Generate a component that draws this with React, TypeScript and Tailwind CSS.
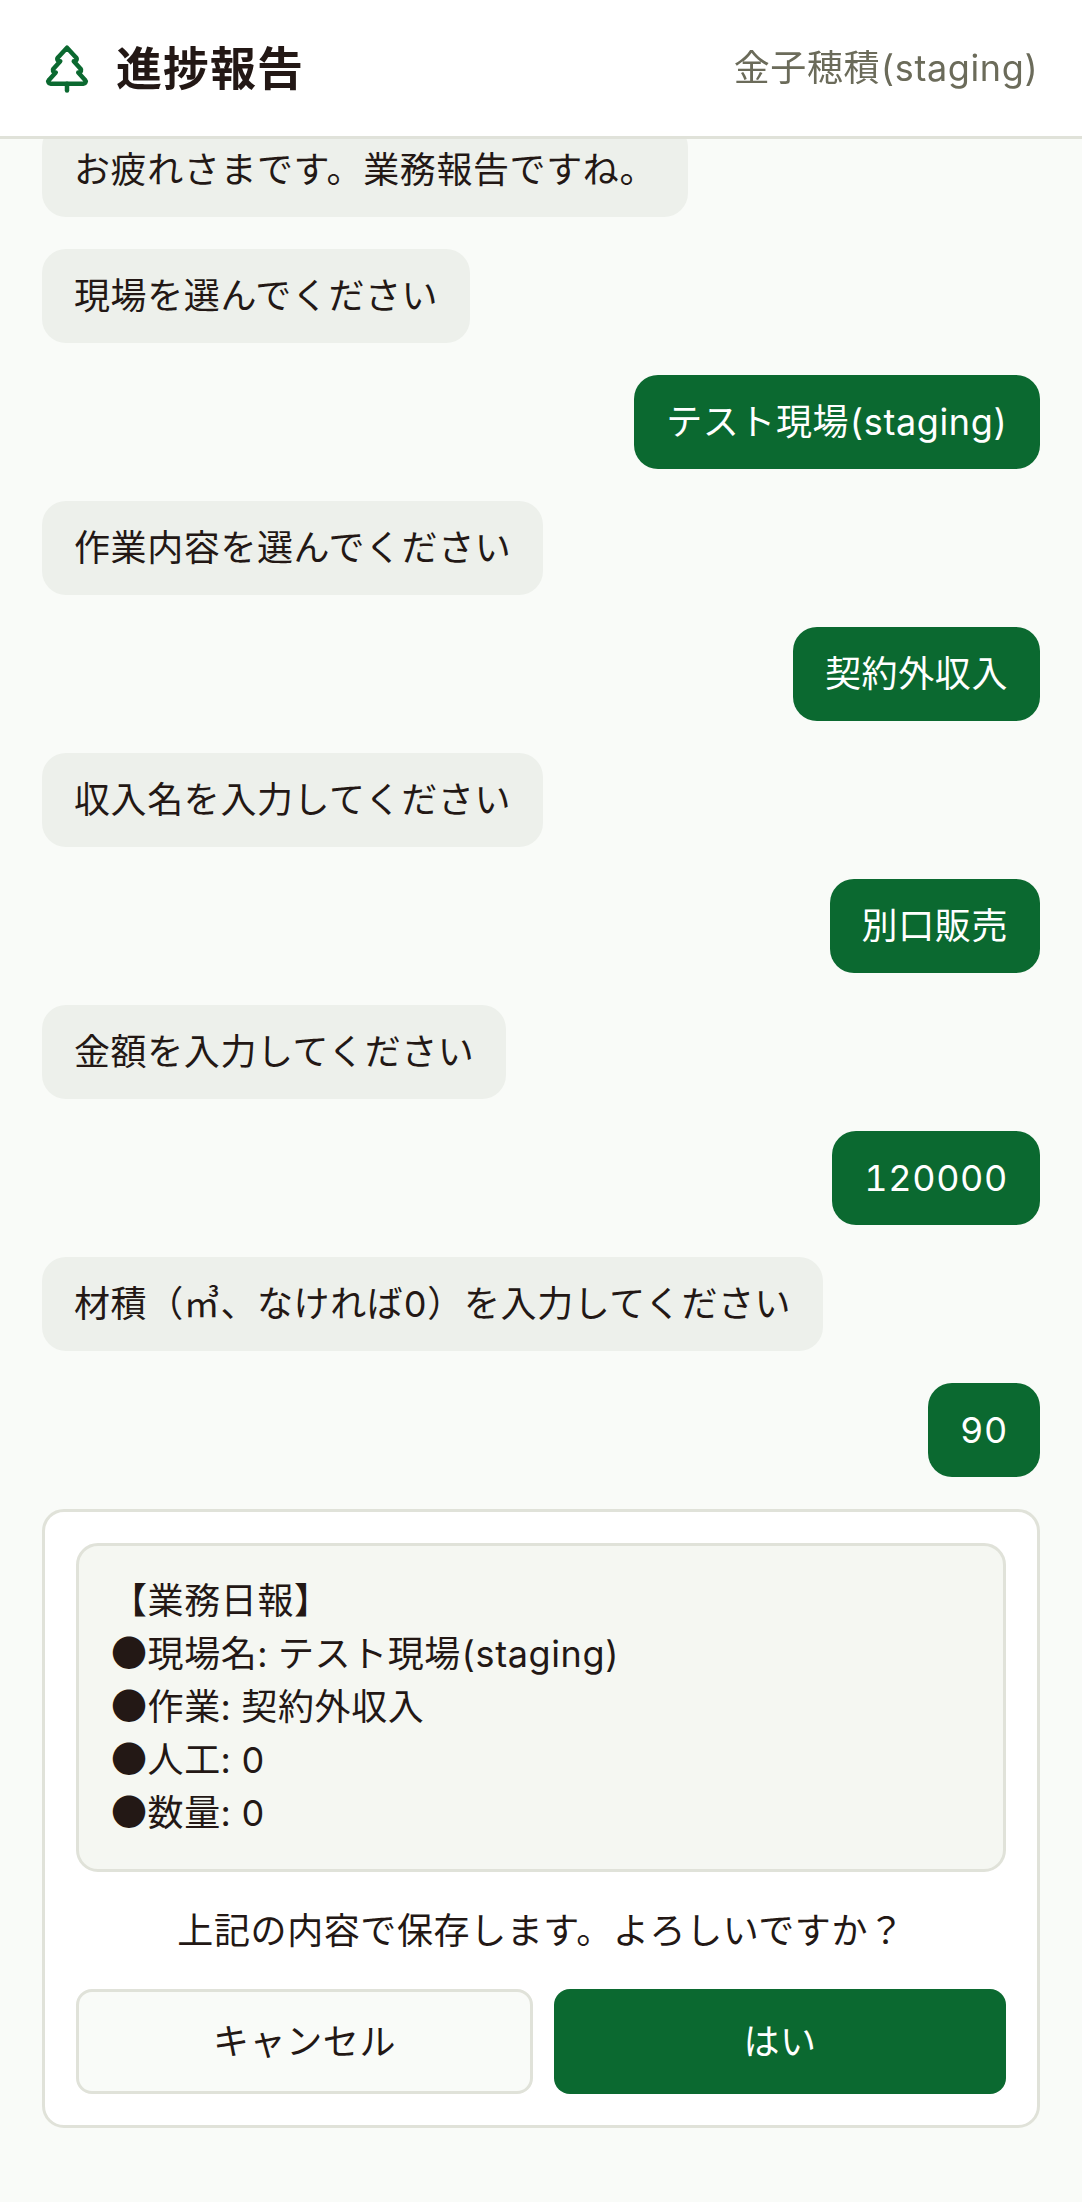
import { TreePine } from "lucide-react";

const font = { fontFamily: 'Inter, "Noto Sans CJK JP", "Noto Sans", sans-serif' };

const messages: { me?: boolean; text: string }[] = [
  { text: "現場を選んでください" },
  { me: true, text: "テスト現場(staging)" },
  { text: "作業内容を選んでください" },
  { me: true, text: "契約外収入" },
  { text: "収入名を入力してください" },
  { me: true, text: "別口販売" },
  { text: "金額を入力してください" },
  { me: true, text: "120000" },
  { text: "材積（㎥、なければ0）を入力してください" },
  { me: true, text: "90" },
];

function Bubble({ me, text }: { me?: boolean; text: string }) {
  return (
    <div className={me ? "flex justify-end" : "flex justify-start"}>
      <div
        className={
          me
            ? "rounded-[24px] bg-[#0b6930] px-[32px] py-[20px] text-[36px] leading-[54px] tracking-[0.6px] text-white"
            : "rounded-[24px] bg-[#edf0eb] px-[32px] py-[20px] text-[36px] leading-[54px] tracking-[0.6px] text-[#231815]"
        }
      >
        {text}
      </div>
    </div>
  );
}

function Dot() {
  return <span className="font-['Noto_Sans_CJK_JP'] leading-[0]">●</span>;
}

export default function App() {
  return (
    <div className="relative h-[2202px] w-[1082px] overflow-hidden bg-[#f9fbf8] tabular-nums text-[#231815]" style={font}>
      <header className="absolute left-0 right-0 top-0 z-10 flex h-[139px] items-center justify-between border-b-[3px] border-[#e0e2d9] bg-white/95 pl-[40px] pr-[43px] backdrop-blur-sm">
        <div className="flex items-center gap-[22px]">
          <TreePine size={54} color="#0b6930" strokeWidth={2} />
          <h1 className="text-[46px] font-bold leading-none tracking-[1px]">進捗報告</h1>
        </div>
        <div className="text-[36px] leading-none tracking-[0.6px] text-[#6b6b5a]">金子穂積(staging)</div>
      </header>

      <main className="flex flex-col gap-[32px] px-[42px] pt-[123px]">
        <Bubble text="お疲れさまです。業務報告ですね。" />
        {messages.map((m, i) => (
          <Bubble key={i} me={m.me} text={m.text} />
        ))}

        <section className="flex flex-col rounded-[22px] border-[3px] border-[#e0e2d9] bg-white px-[31px] py-[31px]">
          <div className="rounded-[22px] border-[3px] border-[#e0e2d9] bg-[#f5f7f2] px-[32px] py-[29px] text-[36px] leading-[53px] tracking-[0.6px]">
            <div>【業務日報】</div>
            <div><Dot />現場名: テスト現場(staging)</div>
            <div><Dot />作業: 契約外収入</div>
            <div><Dot />人工: 0</div>
            <div><Dot />数量: 0</div>
          </div>
          <p className="mt-[32px] text-center text-[36px] leading-[54px] tracking-[0.6px]">上記の内容で保存します。よろしいですか？</p>
          <div className="mt-[31px] flex gap-[21px]">
            <button className="h-[105px] w-[457px] rounded-[16px] border-[3px] border-[#e0e2d9] bg-[#f9fbf8] text-[36px] tracking-[0.6px] text-[#231815]">
              キャンセル
            </button>
            <button className="h-[105px] flex-1 rounded-[16px] bg-[#0b6930] text-[36px] tracking-[0.6px] text-white">はい</button>
          </div>
        </section>
      </main>
    </div>
  );
}
